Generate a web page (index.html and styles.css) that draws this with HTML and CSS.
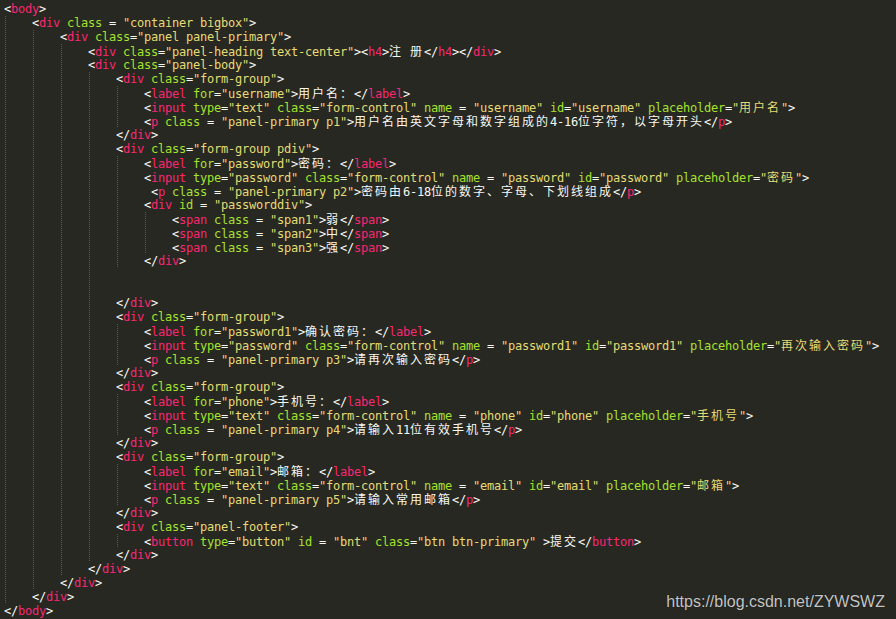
FILE: index.html
```html
<!DOCTYPE html>
<html lang="zh">
<head>
    <meta charset="UTF-8">
    <meta name="viewport" content="width=device-width, initial-scale=1.0">
    <title>register.html</title>
    <link rel="stylesheet" href="styles.css">
</head>
<body>
<div class="editor">
<div class="ln">&lt;<span class="tag">body</span>&gt;</div>
<div class="ln"><i class="g"></i>&lt;<span class="tag">div</span> <span class="attr">class</span> = <span class="str">"container bigbox"</span>&gt;</div>
<div class="ln"><i class="g"></i><i class="g"></i>&lt;<span class="tag">div</span> <span class="attr">class</span>=<span class="str">"panel panel-primary"</span>&gt;</div>
<div class="ln"><i class="g"></i><i class="g"></i><i class="g"></i>&lt;<span class="tag">div</span> <span class="attr">class</span>=<span class="str">"panel-heading text-center"</span>&gt;&lt;<span class="tag">h4</span>&gt;<span class="zh">注</span> <span class="zh">册</span>&lt;/<span class="tag">h4</span>&gt;&lt;/<span class="tag">div</span>&gt;</div>
<div class="ln"><i class="g"></i><i class="g"></i><i class="g"></i>&lt;<span class="tag">div</span> <span class="attr">class</span>=<span class="str">"panel-body"</span>&gt;</div>
<div class="ln"><i class="g"></i><i class="g"></i><i class="g"></i><i class="g"></i>&lt;<span class="tag">div</span> <span class="attr">class</span>=<span class="str">"form-group"</span>&gt;</div>
<div class="ln"><i class="g"></i><i class="g"></i><i class="g"></i><i class="g"></i><i class="g"></i>&lt;<span class="tag">label</span> <span class="attr">for</span>=<span class="str">"username"</span>&gt;<span class="zh">用户名：</span>&lt;/<span class="tag">label</span>&gt;</div>
<div class="ln"><i class="g"></i><i class="g"></i><i class="g"></i><i class="g"></i><i class="g"></i>&lt;<span class="tag">input</span> <span class="attr">type</span>=<span class="str">"text"</span> <span class="attr">class</span>=<span class="str">"form-control"</span> <span class="attr">name</span> = <span class="str">"username"</span> <span class="attr">id</span>=<span class="str">"username"</span> <span class="attr">placeholder</span>=<span class="str">"<span class="zh">用户名</span>"</span>&gt;</div>
<div class="ln"><i class="g"></i><i class="g"></i><i class="g"></i><i class="g"></i><i class="g"></i>&lt;<span class="tag">p</span> <span class="attr">class</span> = <span class="str">"panel-primary p1"</span>&gt;<span class="zh">用户名由英文字母和数字组成的</span>4-16<span class="zh">位字符，以字母开头</span>&lt;/<span class="tag">p</span>&gt;</div>
<div class="ln"><i class="g"></i><i class="g"></i><i class="g"></i><i class="g"></i>&lt;/<span class="tag">div</span>&gt;</div>
<div class="ln"><i class="g"></i><i class="g"></i><i class="g"></i><i class="g"></i>&lt;<span class="tag">div</span> <span class="attr">class</span>=<span class="str">"form-group pdiv"</span>&gt;</div>
<div class="ln"><i class="g"></i><i class="g"></i><i class="g"></i><i class="g"></i><i class="g"></i>&lt;<span class="tag">label</span> <span class="attr">for</span>=<span class="str">"password"</span>&gt;<span class="zh">密码：</span>&lt;/<span class="tag">label</span>&gt;</div>
<div class="ln"><i class="g"></i><i class="g"></i><i class="g"></i><i class="g"></i><i class="g"></i>&lt;<span class="tag">input</span> <span class="attr">type</span>=<span class="str">"password"</span> <span class="attr">class</span>=<span class="str">"form-control"</span> <span class="attr">name</span> = <span class="str">"password"</span> <span class="attr">id</span>=<span class="str">"password"</span> <span class="attr">placeholder</span>=<span class="str">"<span class="zh">密码</span>"</span>&gt;</div>
<div class="ln"><i class="g"></i><i class="g"></i><i class="g"></i><i class="g"></i><i class="g"></i> &lt;<span class="tag">p</span> <span class="attr">class</span> = <span class="str">"panel-primary p2"</span>&gt;<span class="zh">密码由</span>6-18<span class="zh">位的数字、字母、下划线组成</span>&lt;/<span class="tag">p</span>&gt;</div>
<div class="ln"><i class="g"></i><i class="g"></i><i class="g"></i><i class="g"></i><i class="g"></i>&lt;<span class="tag">div</span> <span class="attr">id</span> = <span class="str">"passworddiv"</span>&gt;</div>
<div class="ln"><i class="g"></i><i class="g"></i><i class="g"></i><i class="g"></i><i class="g"></i><i class="g"></i>&lt;<span class="tag">span</span> <span class="attr">class</span> = <span class="str">"span1"</span>&gt;<span class="zh">弱</span>&lt;/<span class="tag">span</span>&gt;</div>
<div class="ln"><i class="g"></i><i class="g"></i><i class="g"></i><i class="g"></i><i class="g"></i><i class="g"></i>&lt;<span class="tag">span</span> <span class="attr">class</span> = <span class="str">"span2"</span>&gt;<span class="zh">中</span>&lt;/<span class="tag">span</span>&gt;</div>
<div class="ln"><i class="g"></i><i class="g"></i><i class="g"></i><i class="g"></i><i class="g"></i><i class="g"></i>&lt;<span class="tag">span</span> <span class="attr">class</span> = <span class="str">"span3"</span>&gt;<span class="zh">强</span>&lt;/<span class="tag">span</span>&gt;</div>
<div class="ln"><i class="g"></i><i class="g"></i><i class="g"></i><i class="g"></i><i class="g"></i>&lt;/<span class="tag">div</span>&gt;</div>
<div class="ln"><i class="g"></i><i class="g"></i><i class="g"></i><i class="g"></i></div>
<div class="ln"><i class="g"></i><i class="g"></i><i class="g"></i><i class="g"></i></div>
<div class="ln"><i class="g"></i><i class="g"></i><i class="g"></i><i class="g"></i>&lt;/<span class="tag">div</span>&gt;</div>
<div class="ln"><i class="g"></i><i class="g"></i><i class="g"></i><i class="g"></i>&lt;<span class="tag">div</span> <span class="attr">class</span>=<span class="str">"form-group"</span>&gt;</div>
<div class="ln"><i class="g"></i><i class="g"></i><i class="g"></i><i class="g"></i><i class="g"></i>&lt;<span class="tag">label</span> <span class="attr">for</span>=<span class="str">"password1"</span>&gt;<span class="zh">确认密码：</span>&lt;/<span class="tag">label</span>&gt;</div>
<div class="ln"><i class="g"></i><i class="g"></i><i class="g"></i><i class="g"></i><i class="g"></i>&lt;<span class="tag">input</span> <span class="attr">type</span>=<span class="str">"password"</span> <span class="attr">class</span>=<span class="str">"form-control"</span> <span class="attr">name</span> = <span class="str">"password1"</span> <span class="attr">id</span>=<span class="str">"password1"</span> <span class="attr">placeholder</span>=<span class="str">"<span class="zh">再次输入密码</span>"</span>&gt;</div>
<div class="ln"><i class="g"></i><i class="g"></i><i class="g"></i><i class="g"></i><i class="g"></i>&lt;<span class="tag">p</span> <span class="attr">class</span> = <span class="str">"panel-primary p3"</span>&gt;<span class="zh">请再次输入密码</span>&lt;/<span class="tag">p</span>&gt;</div>
<div class="ln"><i class="g"></i><i class="g"></i><i class="g"></i><i class="g"></i>&lt;/<span class="tag">div</span>&gt;</div>
<div class="ln"><i class="g"></i><i class="g"></i><i class="g"></i><i class="g"></i>&lt;<span class="tag">div</span> <span class="attr">class</span>=<span class="str">"form-group"</span>&gt;</div>
<div class="ln"><i class="g"></i><i class="g"></i><i class="g"></i><i class="g"></i><i class="g"></i>&lt;<span class="tag">label</span> <span class="attr">for</span>=<span class="str">"phone"</span>&gt;<span class="zh">手机号：</span>&lt;/<span class="tag">label</span>&gt;</div>
<div class="ln"><i class="g"></i><i class="g"></i><i class="g"></i><i class="g"></i><i class="g"></i>&lt;<span class="tag">input</span> <span class="attr">type</span>=<span class="str">"text"</span> <span class="attr">class</span>=<span class="str">"form-control"</span> <span class="attr">name</span> = <span class="str">"phone"</span> <span class="attr">id</span>=<span class="str">"phone"</span> <span class="attr">placeholder</span>=<span class="str">"<span class="zh">手机号</span>"</span>&gt;</div>
<div class="ln"><i class="g"></i><i class="g"></i><i class="g"></i><i class="g"></i><i class="g"></i>&lt;<span class="tag">p</span> <span class="attr">class</span> = <span class="str">"panel-primary p4"</span>&gt;<span class="zh">请输入</span>11<span class="zh">位有效手机号</span>&lt;/<span class="tag">p</span>&gt;</div>
<div class="ln"><i class="g"></i><i class="g"></i><i class="g"></i><i class="g"></i>&lt;/<span class="tag">div</span>&gt;</div>
<div class="ln"><i class="g"></i><i class="g"></i><i class="g"></i><i class="g"></i>&lt;<span class="tag">div</span> <span class="attr">class</span>=<span class="str">"form-group"</span>&gt;</div>
<div class="ln"><i class="g"></i><i class="g"></i><i class="g"></i><i class="g"></i><i class="g"></i>&lt;<span class="tag">label</span> <span class="attr">for</span>=<span class="str">"email"</span>&gt;<span class="zh">邮箱：</span>&lt;/<span class="tag">label</span>&gt;</div>
<div class="ln"><i class="g"></i><i class="g"></i><i class="g"></i><i class="g"></i><i class="g"></i>&lt;<span class="tag">input</span> <span class="attr">type</span>=<span class="str">"text"</span> <span class="attr">class</span>=<span class="str">"form-control"</span> <span class="attr">name</span> = <span class="str">"email"</span> <span class="attr">id</span>=<span class="str">"email"</span> <span class="attr">placeholder</span>=<span class="str">"<span class="zh">邮箱</span>"</span>&gt;</div>
<div class="ln"><i class="g"></i><i class="g"></i><i class="g"></i><i class="g"></i><i class="g"></i>&lt;<span class="tag">p</span> <span class="attr">class</span> = <span class="str">"panel-primary p5"</span>&gt;<span class="zh">请输入常用邮箱</span>&lt;/<span class="tag">p</span>&gt;</div>
<div class="ln"><i class="g"></i><i class="g"></i><i class="g"></i><i class="g"></i>&lt;/<span class="tag">div</span>&gt;</div>
<div class="ln"><i class="g"></i><i class="g"></i><i class="g"></i><i class="g"></i>&lt;<span class="tag">div</span> <span class="attr">class</span>=<span class="str">"panel-footer"</span>&gt;</div>
<div class="ln"><i class="g"></i><i class="g"></i><i class="g"></i><i class="g"></i><i class="g"></i>&lt;<span class="tag">button</span> <span class="attr">type</span>=<span class="str">"button"</span> <span class="attr">id</span> = <span class="str">"bnt"</span> <span class="attr">class</span>=<span class="str">"btn btn-primary"</span> &gt;<span class="zh">提交</span>&lt;/<span class="tag">button</span>&gt;</div>
<div class="ln"><i class="g"></i><i class="g"></i><i class="g"></i><i class="g"></i>&lt;/<span class="tag">div</span>&gt;</div>
<div class="ln"><i class="g"></i><i class="g"></i><i class="g"></i>&lt;/<span class="tag">div</span>&gt;</div>
<div class="ln"><i class="g"></i><i class="g"></i>&lt;/<span class="tag">div</span>&gt;</div>
<div class="ln"><i class="g"></i>&lt;/<span class="tag">div</span>&gt;</div>
<div class="ln">&lt;/<span class="tag">body</span>&gt;</div>
</div>
<span class="mark">https://blog.csdn.net/ZYWSWZ</span>
</body>
</html>
```

FILE: styles.css
```css
html, body {
    margin: 0;
    height: 100%;
    background-color: #272822;
    overflow: hidden;
}
.editor {
    padding: 2px 0 0 4px;
    font-family: "DejaVu Sans Mono", "Noto Sans CJK SC", monospace;
    font-size: 12px;
    letter-spacing: -0.225px;
    color: #f8f8f2;
}
.ln {
    height: 14px;
    line-height: 14px;
    white-space: pre;
}
.g {
    display: inline-block;
    width: 28px;
    height: 14px;
    vertical-align: top;
    background: linear-gradient(#5a5a52 50%, transparent 50%) 1px 0 / 1px 2px repeat-y;
}
.tag {
    color: #f92672;
}
.attr {
    color: #a6e22e;
}
.str {
    color: #e6db74;
}
.zh {
    font-family: "Noto Sans CJK SC", sans-serif;
    letter-spacing: 2px;
}
.mark {
    position: absolute;
    right: 11px;
    bottom: 8px;
    font-family: "Liberation Sans", Arial, sans-serif;
    font-size: 16px;
    color: #c4c4c4;
    text-shadow: 0 0 1px #111;
}
```
